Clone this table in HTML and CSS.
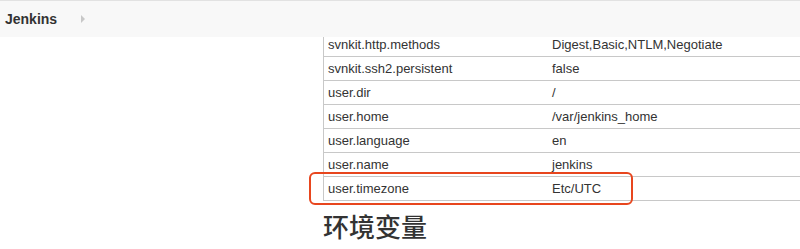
FILE: index.html
```html
<!DOCTYPE html>
<html lang="zh-CN">
<head>
    <meta charset="UTF-8">
    <meta name="viewport" content="width=device-width, initial-scale=1.0">
    <title>Jenkins 系统信息</title>
    <link rel="stylesheet" href="styles.css">
</head>
<body>
    <header class="breadcrumb-bar">
        <a href="#" class="crumb">Jenkins</a>
        <span class="crumb-arrow"></span>
    </header>

    <div class="page">
        <aside class="side-panel"></aside>
        <main class="main-panel">
            <div class="props-wrap">
                <table class="props">
                    <tr><td>svnkit.http.methods</td><td>Digest,Basic,NTLM,Negotiate</td></tr>
                    <tr><td>svnkit.ssh2.persistent</td><td>false</td></tr>
                    <tr><td>user.dir</td><td>/</td></tr>
                    <tr><td>user.home</td><td>/var/jenkins_home</td></tr>
                    <tr><td>user.language</td><td>en</td></tr>
                    <tr><td>user.name</td><td>jenkins</td></tr>
                    <tr><td>user.timezone</td><td>Etc/UTC</td></tr>
                </table>
                <div class="mark"></div>
            </div>
            <h2 class="section-title">环境变量</h2>
        </main>
    </div>
</body>
</html>
```

FILE: styles.css
```css
body {
    margin: 0;
    font-family: "Liberation Sans", Arial, "Noto Sans CJK SC", sans-serif;
    color: #333;
    background: #fff;
    overflow: hidden;
}

.breadcrumb-bar {
    position: relative;
    z-index: 2;
    height: 36px;
    display: flex;
    align-items: center;
    background: #f8f8f8;
    border-top: 1px solid #e2e2e2;
    padding-left: 5px;
}

.crumb {
    font-size: 14px;
    font-weight: bold;
    color: #333;
    text-decoration: none;
}

.crumb-arrow {
    margin-left: 24px;
    width: 0;
    height: 0;
    border-top: 4px solid transparent;
    border-bottom: 4px solid transparent;
    border-left: 4px solid #c8c8c8;
}

.page {
    display: grid;
    grid-template-columns: 315px 1fr;
    margin-top: -4px;
}

.main-panel {
    padding-left: 8px;
    min-width: 0;
}

.props-wrap {
    position: relative;
}

.props {
    border-collapse: collapse;
    width: 100%;
    font-size: 13px;
    line-height: 15px;
    border-left: 1px solid #c8c8c8;
}

.props td {
    padding: 4px 4px;
    border-bottom: 1px solid #c8c8c8;
    white-space: nowrap;
}

.props td:first-child {
    width: 216px;
}

/* highlight round the last row */
.mark {
    position: absolute;
    left: -14px;
    bottom: -4px;
    width: 320px;
    height: 29px;
    border: 2.5px solid #e8461e;
    border-radius: 6px;
}

.section-title {
    margin: 12px 0 0;
    font-size: 26px;
    line-height: 31px;
    font-weight: 500;
    color: #333;
}
```
